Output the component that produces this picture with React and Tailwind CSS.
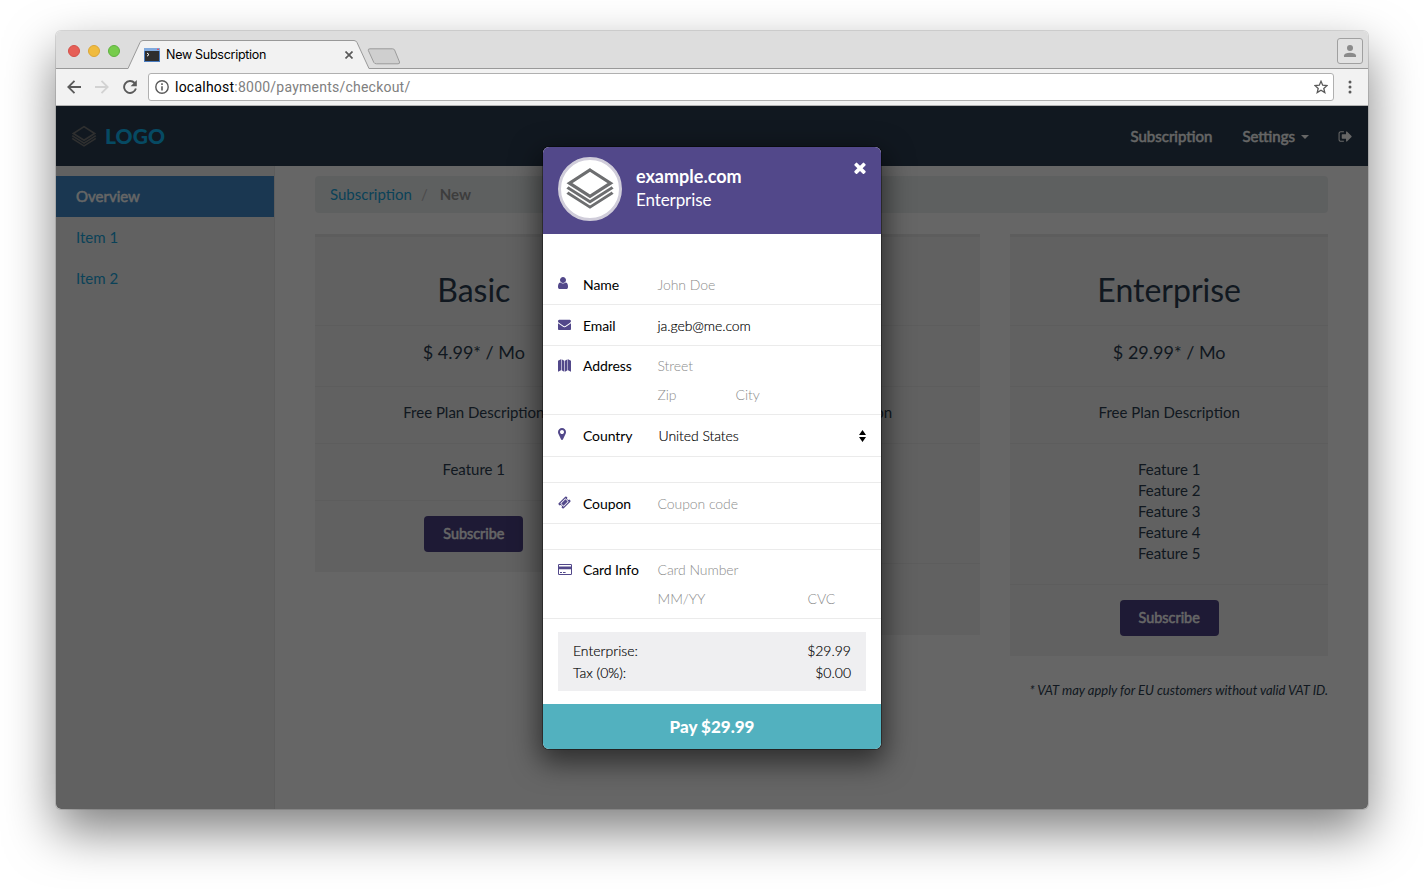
import React from "react";

const FA = {
  user: "M1536 1399q0 109-62.5 187t-150.5 78h-854q-88 0-150.5-78t-62.5-187q0-85 8.5-160.5t31.5-152 58.5-131 94-89 134.5-34.5q131 128 313 128t313-128q76 0 134.5 34.5t94 89 58.5 131 31.5 152 8.5 160.5zm-256-887q0 159-112.5 271.5t-271.5 112.5-271.5-112.5-112.5-271.5 112.5-271.5 271.5-112.5 271.5 112.5 112.5 271.5z",
  envelope: "M1792 710v794q0 66-47 113t-113 47h-1472q-66 0-113-47t-47-113v-794q44 49 101 87 362 246 497 345 57 42 92.5 65.5t94.5 48 110 24.5h2q51 0 110-24.5t94.5-48 92.5-65.5q170-123 498-345 57-39 100-87zm0-294q0 79-49 151t-122 123q-376 261-468 325-10 7-42.5 31t-54 38.5-52 32.5-57.5 27-50 9h-2q-23 0-50-9t-57.5-27-52-32.5-54-38.5-42.5-31q-91-64-262-182.5t-205-142.5q-62-42-117-115.5t-55-136.5q0-78 41.5-130t118.5-52h1472q65 0 112.5 47t47.5 113z",
  marker: "M1152 640q0-106-75-181t-181-75-181 75-75 181 75 181 181 75 181-75 75-181zm256 0q0 109-33 179l-364 774q-16 33-47.5 52t-67.5 19-67.5-19-46.5-52l-365-774q-33-70-33-179 0-212 150-362t362-150 362 150 150 362z",
  times: "M1490 1322q0 40-28 68l-136 136q-28 28-68 28t-68-28l-294-294-294 294q-28 28-68 28t-68-28l-136-136q-28-28-28-68t28-68l294-294-294-294q-28-28-28-68t28-68l136-136q28-28 68-28t68 28l294 294 294-294q28-28 68-28t68 28l136 136q28 28 28 68t-28 68l-294 294 294 294q28 28 28 68z",
  ticket: "M1024 452l316 316-572 572-316-316zm-211 979l618-618q19-19 19-45t-19-45l-362-362q-18-18-45-18t-45 18l-618 618q-19 19-19 45t19 45l362 362q18 18 45 18t45-18zm889-637l-907 908q-37 37-90.5 37t-90.5-37l-126-126q56-56 56-136t-56-136-136-56-136 56l-125-126q-37-37-37-90.5t37-90.5l907-906q37-37 90.5-37t90.5 37l125 125q-56 56-56 136t56 136 136 56 136-56l126 125q37 37 37 90.5t-37 90.5z",
  signOut: "M704 1440q0 4 1 20t.5 26.5-3 23.5-10 19.5-20.5 6.5h-320q-119 0-203.5-84.5t-84.5-203.5v-704q0-119 84.5-203.5t203.5-84.5h320q13 0 22.5 9.5t9.5 22.5q0 4 1 20t.5 26.5-3 23.5-10 19.5-20.5 6.5h-320q-66 0-113 47t-47 113v704q0 66 47 113t113 47h312l11.5 1 11.5 3 8 5.5 7 9 2 13.5zm928-544q0 26-19 45l-544 544q-19 19-45 19t-45-19-19-45v-288h-448q-26 0-45-19t-19-45v-384q0-26 19-45t45-19h448v-288q0-26 19-45t45-19 45 19l544 544q19 19 19 45z",
};

function Glyph({ name, className, box = "0 0 1792 1792" }) {
  return (
    <svg viewBox={box} className={className} fill="currentColor">
      <path d={FA[name]} />
    </svg>
  );
}

function Layers({ className }) {
  return (
    <svg viewBox="0 0 50 44" className={className} fill="none" stroke="currentColor" strokeWidth="2.8">
      <path d="M25 3 L45.5 16.2 L25 29.3 L4.5 16.2 Z" strokeWidth="3.2" />
      <path d="M4.6 20.2 L3.6 21.2 L25 34.8 L46.4 21.2 L45.4 20.2" />
      <path d="M4.6 25.4 L3.6 26.4 L25 40.1 L46.4 26.4 L45.4 25.4" />
    </svg>
  );
}

function MapIcon() {
  return (
    <svg viewBox="0 0 13 13" className="mt-[2px] h-[13px] w-[13px]" fill="currentColor">
      <path d="M0 1.8 L3 .3 V11.2 L0 12.7 Z M3.6 .3 L6.3 1.8 V12.7 L3.6 11.2 Z M6.9 1.8 L9.5 .3 V11.2 L6.9 12.7 Z M10 .3 L13 1.8 V12.7 L10 11.2 Z" />
    </svg>
  );
}

function CardIcon() {
  return (
    <svg viewBox="0 0 14 12" className="mt-[4px] h-[12px] w-[14px]" fill="currentColor">
      <path
        fillRule="evenodd"
        d="M1.2 0H12.8Q14 0 14 1.2V9.8Q14 11 12.8 11H1.2Q0 11 0 9.8V1.2Q0 0 1.2 0Z M1 1.2V2.6H13V1.2L12.8 1H1.2Z M1 5.2V9.8L1.2 10H12.8L13 9.8V5.2Z M2 8H4V9H2Z M5 8H7.6V9H5Z"
      />
    </svg>
  );
}

function TabStrip() {
  return (
    <div className="flex h-[37px] shrink-0 bg-[#dddddd]">
      <div className="flex w-[72px] shrink-0 gap-2 pt-[14px] pl-3">
        <span className="h-3 w-3 rounded-full border border-[#d35049] bg-[#e65f57]" />
        <span className="h-3 w-3 rounded-full border border-[#dba636] bg-[#f0bb3e]" />
        <span className="h-3 w-3 rounded-full border border-[#5fb140] bg-[#76cc4c]" />
      </div>
      <div className="relative h-[38px] w-[243px] shrink-0">
        <svg viewBox="0 0 243 38" className="absolute inset-0 h-full w-full">
          <path d="M0 37.5 L12 11.5 Q13 9.5 15 9.5 H226 Q228 9.5 229 11.5 L241 37.5 V38 H0 Z" fill="#f2f2f2" />
          <path d="M0 37.5 L12 11.5 Q13 9.5 15 9.5 H226 Q228 9.5 229 11.5 L241 37.5" fill="none" stroke="#999" />
        </svg>
        <div className="relative flex h-full items-center pt-[10px] pl-4">
          <svg viewBox="0 0 16 14" className="h-[14px] w-4">
            <rect width="16" height="14" fill="#4a7cc0" />
            <rect y="0" width="16" height="3" fill="#7fa9de" />
            <rect x="13" y=".7" width="2" height="1.3" fill="#d9566a" />
            <rect x="1" y="3" width="14" height="10" fill="#2e2e2e" />
            <path d="M3 5 L5 6.6 L3 8.2" fill="none" stroke="#fff" />
          </svg>
          <span className="ml-[6px] w-[179px] font-[Inter,sans-serif] text-[12.5px] tracking-[-0.28px] text-black">New Subscription</span>
          <svg viewBox="0 0 8 8" className="h-2 w-2" stroke="#5a5a5a" strokeWidth="1.7">
            <path d="M.5 .5 L7.5 7.5 M7.5 .5 L.5 7.5" />
          </svg>
        </div>
      </div>
      <svg viewBox="0 0 34 17" className="mt-[17px] -ml-[4px] h-[17px] w-[34px]">
        <path d="M3 .8 H25.5 Q27 .8 27.6 2 L32.5 14 Q33 15.8 31 15.8 H9.5 Q7.5 15.8 6.8 14.4 L1.3 2.4 Q.8 .8 3 .8 Z" fill="#cfcfcf" stroke="#9b9b9b" />
      </svg>
      <div className="mt-[7px] mr-[5px] ml-auto flex h-[26px] w-[26px] items-center justify-center rounded-[3px] border border-[#a0a0a0] bg-[#e2e2e2]">
        <svg viewBox="0 0 14 14" className="h-[14px] w-[14px]" fill="#8a8a8a">
          <circle cx="7" cy="4" r="3" />
          <path d="M1 13 V11.6 Q1.5 8.8 7 8.8 Q12.5 8.8 13 11.6 V13 Z" />
        </svg>
      </div>
    </div>
  );
}

function AddressBar() {
  return (
    <div className="flex h-[38px] shrink-0 items-center border-t border-b border-t-[#999] border-b-[#b3b3b3] bg-[#f2f2f2] pl-[11px]">
      <svg viewBox="0 0 14 14" className="h-[14px] w-[14px]" fill="none" stroke="#5a5a5a" strokeWidth="1.8">
        <path d="M14 7 H1.5 M7.5 .8 L1.3 7 L7.5 13.2" />
      </svg>
      <svg viewBox="0 0 14 14" className="ml-[14px] h-[14px] w-[14px]" fill="none" stroke="#d2d2d2" strokeWidth="1.8">
        <path d="M0 7 H12.5 M6.5 .8 L12.7 7 L6.5 13.2" />
      </svg>
      <svg viewBox="0 0 14 14" className="ml-[14px] h-[14px] w-[14px]" fill="none" stroke="#5a5a5a" strokeWidth="1.9">
        <path d="M11.6 3 A6 6 0 1 0 12.9 8.6" />
        <path d="M13.8 0 V6.2 H7.6 Z" fill="#5a5a5a" stroke="none" />
      </svg>
      <div className="ml-[11px] flex h-7 w-[1186px] items-center rounded-[3px] border border-[#b0b0b0] bg-white pr-[5px] pl-[6px]">
        <svg viewBox="0 0 14 14" className="h-[14px] w-[14px]" fill="none" stroke="#5a5a5a" strokeWidth="1.4">
          <circle cx="7" cy="7" r="6.2" />
          <path d="M7 6.2 V10.6 M7 3.3 V4.9" strokeWidth="1.6" />
        </svg>
        <span className="ml-[6px] font-[Roboto,sans-serif] text-[14px] tracking-[0.23px] text-[#808080]">
          <span className="text-black">localhost</span>:8000/payments/checkout/
        </span>
        <svg viewBox="0 0 14 14" className="ml-auto h-[14px] w-[14px]" fill="none" stroke="#5a5a5a" strokeWidth="1.3">
          <path d="M7 1.3 L8.7 5.2 L13 5.6 L9.8 8.4 L10.8 12.6 L7 10.3 L3.2 12.6 L4.2 8.4 L1 5.6 L5.3 5.2 Z" />
        </svg>
      </div>
      <svg viewBox="0 0 4 14" className="ml-[14px] h-[14px] w-1" fill="#5a5a5a">
        <circle cx="2" cy="2" r="1.5" />
        <circle cx="2" cy="7" r="1.5" />
        <circle cx="2" cy="12" r="1.5" />
      </svg>
    </div>
  );
}

function Navbar() {
  return (
    <div className="flex h-[60px] shrink-0 items-center bg-[#2c3e50] pr-[15px] pl-[15px] text-[15px] text-white">
      <Layers className="h-[23px] w-[26px] text-[#777]" />
      <span className="ml-2 text-[21px] font-black tracking-[0.05px] text-[#10baf8]">LOGO</span>
      <span className="ml-auto [-webkit-text-stroke:0.5px]">Subscription</span>
      <span className="ml-[30px] [-webkit-text-stroke:0.5px]">Settings</span>
      <span className="mt-[2px] ml-[6px] border-x-4 border-t-4 border-x-transparent border-t-white" />
      <Glyph name="signOut" className="ml-[29px] h-[15px] w-[15px]" />
    </div>
  );
}

function Row({ className, children }) {
  return <div className={"w-full border-b border-[#e9e9e9] pb-5 text-center " + className}>{children}</div>;
}

function Plan({ name, price, features }) {
  return (
    <div className="flex flex-1 flex-col items-center border-t-[3px] border-[#e9e9e9] bg-[#f2f2f2] text-[#2c3e50]">
      <div className="flex h-[89px] w-full justify-center border-b border-[#e9e9e9] pt-[33px] text-[32px] leading-[39px]">{name}</div>
      <Row className="h-[61px] pt-[14px] text-[18px] leading-[25px]">$ {price}* / Mo</Row>
      <Row className="pt-[15px] text-[15px] leading-[21px]">Free Plan Description</Row>
      <Row className="pt-[15px] text-[15px] leading-[21px]">
        {features.map((f) => (
          <div key={f}>{f}</div>
        ))}
      </Row>
      <div className="mt-[15px] mb-5 flex h-9 w-[99px] items-center justify-center rounded-[4px] bg-[#4c4184] text-[14.4px] text-white [-webkit-text-stroke:0.5px]">
        Subscribe
      </div>
    </div>
  );
}

const feats = (n) => Array.from({ length: n }, (_, i) => `Feature ${i + 1}`);

function Page() {
  return (
    <div className="flex flex-1">
      <div className="w-[219px] shrink-0 border-r border-[#e9e9e9] bg-[#f3f3f3] pt-[10px] text-[15px] leading-[41px] text-[#1aa5dc]">
        <div className="bg-[#428bca] pl-5 text-white [-webkit-text-stroke:0.5px]">Overview</div>
        <div className="pl-5">Item 1</div>
        <div className="pl-5">Item 2</div>
      </div>
      <div className="flex-1 px-10 pt-[10px]">
        <div className="flex h-[37px] items-center rounded-[4px] bg-[#ecf0f1] pl-[15px] text-[15px]">
          <span className="text-[#1aa5dc]">Subscription</span>
          <span className="ml-[9px] text-[#bbb]">/</span>
          <span className="ml-[12px] font-bold text-[#999]">New</span>
        </div>
        <div className="mt-[21px] flex items-start gap-[30px]">
          <Plan name="Basic" price="4.99" features={feats(1)} />
          <Plan name="Pro" price="9.99" features={feats(4)} />
          <Plan name="Enterprise" price="29.99" features={feats(5)} />
        </div>
        <div className="mt-[24px] text-right text-[13px] leading-5 text-[#2c3e50] italic">* VAT may apply for EU customers without valid VAT ID.</div>
      </div>
    </div>
  );
}

function Field({ icon, label, children, className }) {
  return (
    <div className={"flex border-b border-[#ebebeb] pl-[15px] text-[14px] leading-[29px] " + className}>
      <div className="flex h-[26px] w-[25px] shrink-0 items-center text-[#52488a]">{icon}</div>
      <div className="w-[74px] shrink-0 tracking-[-0.1px] text-black">{label}</div>
      <div className="flex-1 pl-[0.5px] font-light tracking-[-0.07px] text-[#8c8c8c]">{children}</div>
    </div>
  );
}

function Checkout() {
  return (
    <div className="flex h-[602px] w-[338px] flex-col overflow-hidden rounded-[6px] bg-white shadow-[0_0_0_1px_rgba(0,0,0,0.35),0_10px_28px_4px_rgba(0,0,0,0.55)]">
      <div className="flex h-[87px] shrink-0 bg-[#52488a] pt-[10px] pr-[15px] pl-[15px] text-white">
        <div className="flex h-16 w-16 items-center justify-center rounded-full border-[3px] border-[#d0cdda] bg-white">
          <Layers className="h-[44px] w-[50px] shrink-0 text-[#6d6e70]" />
        </div>
        <div className="ml-[14px] pt-2 text-[18px] leading-[23px]">
          <div className="font-bold">example.com</div>
          <div className="text-[17px] tracking-[-0.1px]">Enterprise</div>
        </div>
        <Glyph name="times" box="302 302 1188 1252" className="mt-[5px] ml-auto h-3 w-3" />
      </div>
      <Field className="mt-[30px] h-[41px] pt-[6px]" label="Name" icon={<Glyph name="user" box="256 0 1280 1792" className="h-[14px] w-[10px]" />}>
        John Doe
      </Field>
      <Field className="h-[41px] pt-[6px]" label="Email" icon={<Glyph name="envelope" className="h-[13px] w-[13px]" />}>
        <span className="text-black [-webkit-text-stroke:0.15px]">ja.geb@me.com</span>
      </Field>
      <Field className="h-[69px] pt-[5px]" label="Address" icon={<MapIcon />}>
        <div>Street</div>
        <div className="flex">
          <span className="w-[78px]">Zip</span>
          <span>City</span>
        </div>
      </Field>
      <Field className="h-[42px] pt-[6px]" label="Country" icon={<Glyph name="marker" box="384 0 1024 1792" className="h-[14px] w-2" />}>
        <div className="flex items-center pr-[15px] pl-[1px] text-black [-webkit-text-stroke:0.15px]">
          <span>United States</span>
          <svg viewBox="0 0 7 12" className="ml-auto h-3 w-[7px]">
            <path d="M3.5 0 L7 5 H0 Z M0 7 H7 L3.5 12 Z" fill="#000" />
          </svg>
        </div>
      </Field>
      <Field className="mt-[25px] h-[42px] border-t pt-[6px]" label="Coupon" icon={<Glyph name="ticket" className="h-[13px] w-[13px]" />}>
        Coupon code
      </Field>
      <Field className="mt-[25px] h-[70px] border-t pt-[5px]" label="Card Info" icon={<CardIcon />}>
        <div>Card Number</div>
        <div className="flex">
          <span className="w-[150px]">MM/YY</span>
          <span>CVC</span>
        </div>
      </Field>
      <div className="mx-[15px] mt-[13px] h-[59px] bg-[#efeff1] px-[15px] pt-2 text-[14px] leading-[22px] font-light text-black [-webkit-text-stroke:0.15px]">
        <div className="flex justify-between">
          <span>Enterprise:</span>
          <span>$29.99</span>
        </div>
        <div className="flex justify-between">
          <span>Tax (0%):</span>
          <span>$0.00</span>
        </div>
      </div>
      <div className="mt-auto flex h-[45px] items-center justify-center bg-[#52b1bf] text-[17px] font-black text-white">Pay $29.99</div>
    </div>
  );
}

export default function App() {
  return (
    <div className="h-[889px] w-full overflow-hidden bg-white pt-[31px] pl-[56px]">
      <div className="flex h-[778px] w-[1312px] flex-col overflow-hidden rounded-[5px] font-[Lato,sans-serif] shadow-[0_0_0_1px_rgba(0,0,0,0.12),0_22px_50px_rgba(0,0,0,0.5)]">
        <TabStrip />
        <AddressBar />
        <div className="relative flex flex-1 flex-col bg-white">
          <Navbar />
          <Page />
          <div className="absolute inset-0 flex justify-center bg-black/60 pt-[41px]">
            <Checkout />
          </div>
        </div>
      </div>
    </div>
  );
}
